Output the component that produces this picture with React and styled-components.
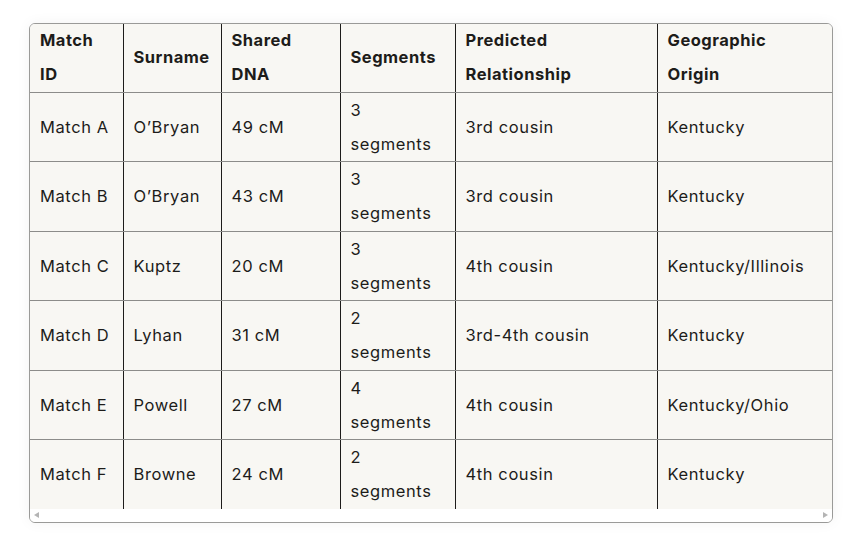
import React from "react";
import styled, { createGlobalStyle } from "styled-components";

const Global = createGlobalStyle`
  html, body { margin: 0; padding: 0; background: #ffffff; }
  body { font-family: Inter, "Noto Sans", sans-serif; color: #1d1c1a; }
`;

const Page = styled.div`
  width: 853px;
  height: 543px;
  overflow: hidden;
  padding: 0 0 0 29px;
  box-sizing: border-box;
`;

const Lead = styled.p`
  margin: -24px 0 0 4px;
  height: 24px;
  font-size: 16.5px;
  letter-spacing: 0.6px;
  line-height: 24px;
  white-space: nowrap;
`;

const Frame = styled.div`
  margin-top: 23px;
  width: 804px;
  box-sizing: border-box;
  border: 1px solid #9a9a98;
  border-radius: 6px;
  overflow: hidden;
  background: #ffffff;
  box-shadow: 0 0 14px rgba(0, 0, 0, 0.05);
`;

const Table = styled.table`
  border-collapse: collapse;
  table-layout: fixed;
  width: 802px;
  background: #f8f7f3;
  font-size: 16.5px;
  letter-spacing: 0.6px;
`;

const Cell = styled.td`
  padding: 0 10px;
  line-height: 34.25px;
  vertical-align: middle;
  text-align: left;
  border-right: 1px solid #1d1c1a;
  border-bottom: ${(p) => (p.$last ? "none" : "1px solid #8c8c8a")};
  &:last-child { border-right: none; }
`;

const Head = styled(Cell).attrs({ as: "th" })`
  font-weight: 700;
  letter-spacing: 0.5px;
  line-height: 33.75px;
`;

const ScrollTrack = styled.div`
  height: 13px;
  display: flex;
  align-items: center;
  justify-content: space-between;
  padding: 0 4px;
  background: #ffffff;
`;

const Arrow = styled.span`
  width: 0;
  height: 0;
  border-top: 3.5px solid transparent;
  border-bottom: 3.5px solid transparent;
  ${(p) =>
    p.$dir === "left"
      ? "border-right: 5px solid #b4b4b4;"
      : "border-left: 5px solid #b4b4b4;"}
`;

const cols = [93, 98, 119, 115, 202, 175];
const headers = [
  "Match ID",
  "Surname",
  "Shared DNA",
  "Segments",
  "Predicted Relationship",
  "Geographic Origin",
];
const rows = [
  ["Match A", "O’Bryan", "49 cM", "3 segments", "3rd cousin", "Kentucky"],
  ["Match B", "O’Bryan", "43 cM", "3 segments", "3rd cousin", "Kentucky"],
  ["Match C", "Kuptz", "20 cM", "3 segments", "4th cousin", "Kentucky/Illinois"],
  ["Match D", "Lyhan", "31 cM", "2 segments", "3rd-4th cousin", "Kentucky"],
  ["Match E", "Powell", "27 cM", "4 segments", "4th cousin", "Kentucky/Ohio"],
  ["Match F", "Browne", "24 cM", "2 segments", "4th cousin", "Kentucky"],
];

export default function App() {
  return (
    <>
      <Global />
      <Page>
        <Lead>Here are the suggested matches to explore:</Lead>
        <Frame>
          <Table>
            <colgroup>
              {cols.map((w, i) => (
                <col key={i} style={{ width: w }} />
              ))}
            </colgroup>
            <thead>
              <tr>
                {headers.map((h) => (
                  <Head key={h}>{h}</Head>
                ))}
              </tr>
            </thead>
            <tbody>
              {rows.map((r, i) => (
                <tr key={r[0]}>
                  {r.map((c, j) => (
                    <Cell key={j} $last={i === rows.length - 1}>
                      {c}
                    </Cell>
                  ))}
                </tr>
              ))}
            </tbody>
          </Table>
          <ScrollTrack>
            <Arrow $dir="left" />
            <Arrow $dir="right" />
          </ScrollTrack>
        </Frame>
      </Page>
    </>
  );
}
